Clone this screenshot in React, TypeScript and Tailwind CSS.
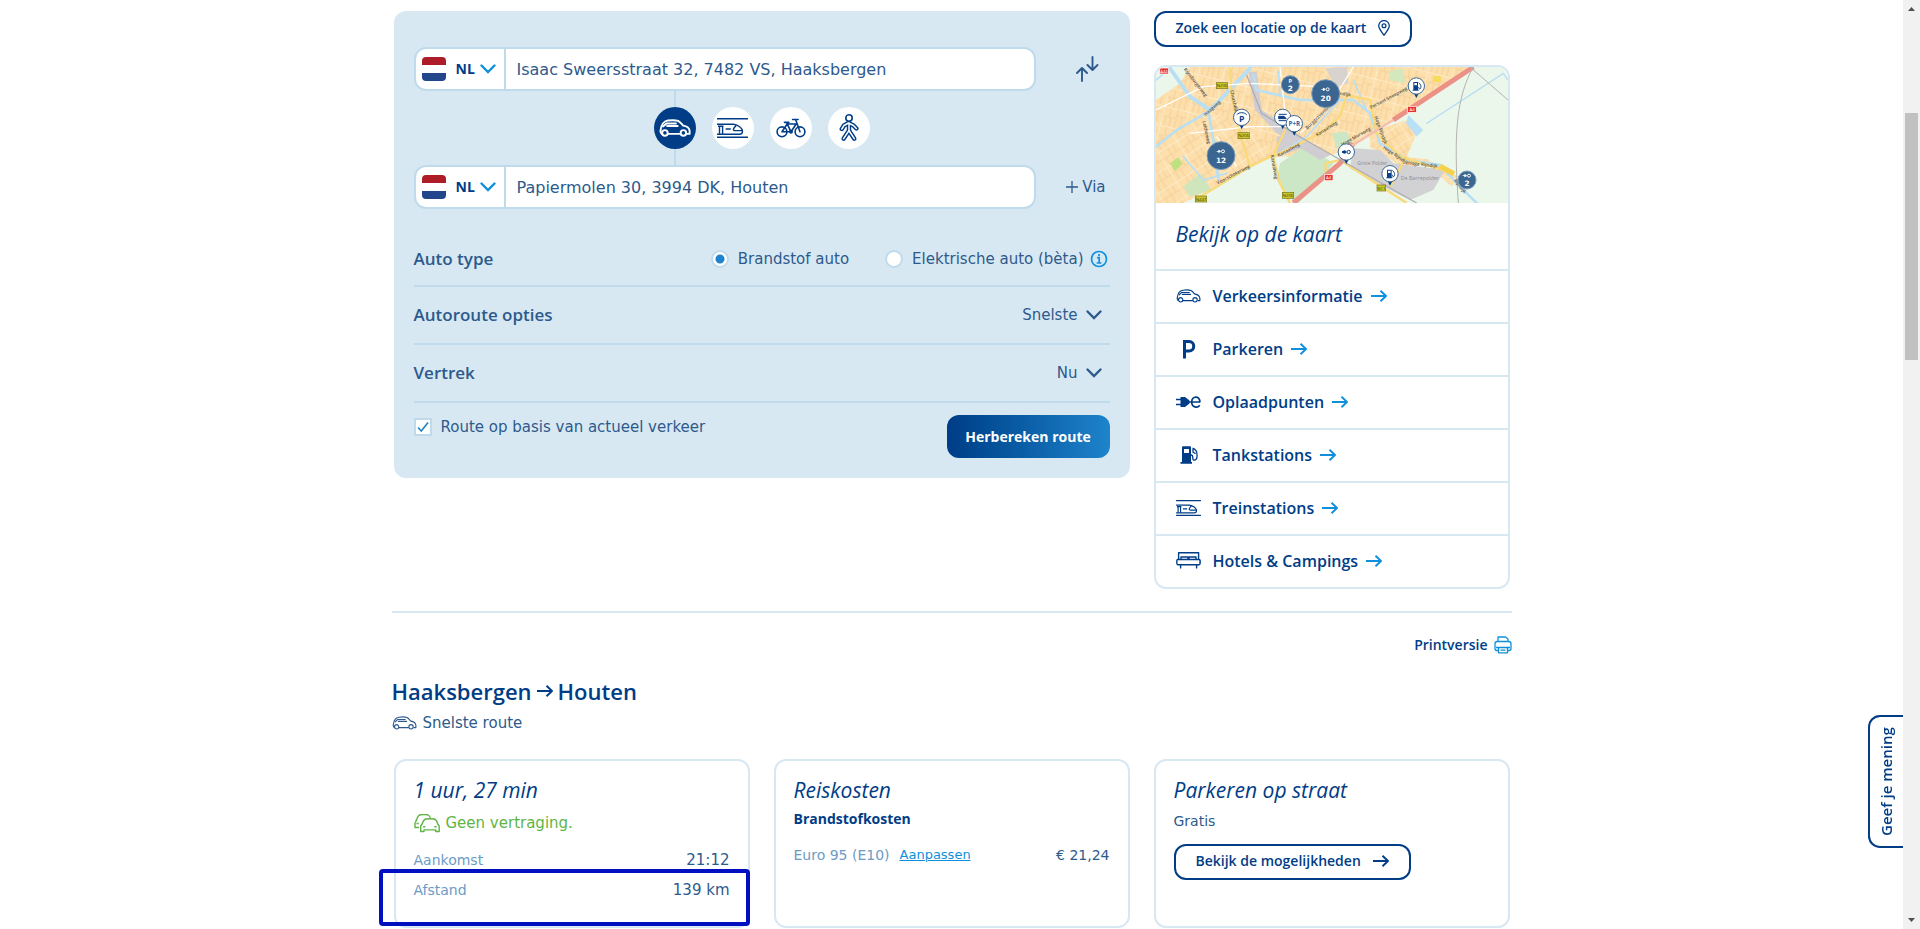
import { useState } from 'react'
import type { ReactNode } from 'react'
import clsx from 'clsx'

const HEAD = "font-['Open_Sans','Noto_Sans',sans-serif]"

function Arrow({ className }: { className?: string }) {
  return (
    <svg viewBox="0 0 16 12" className={clsx('w-4 h-3 shrink-0', className)} fill="none" stroke="currentColor" strokeWidth="1.9" strokeLinejoin="round">
      <path d="M0 6h15M9.500.8L15 6l-5.500 5.200" />
    </svg>
  )
}

function Chevron({ className }: { className?: string }) {
  return (
    <svg viewBox="0 0 16 10" className={clsx('h-[10px] w-4 shrink-0 pointer-events-none', className)} fill="none" stroke="currentColor" strokeWidth="2.4" strokeLinecap="round">
      <path d="M1.500 1.500L8 8l6.500-6.500" />
    </svg>
  )
}

function CarIcon({ className, strokeWidth = 1.2 }: { className?: string; strokeWidth?: number }) {
  return (
    <svg viewBox="0 0 26 15" className={clsx('shrink-0', className)} fill="none" stroke="currentColor" strokeWidth={strokeWidth} strokeLinejoin="round" strokeLinecap="round">
      <path d="M2 12.4C.8 11.8.8 10.4 1 9.2 1.4 5.6 3.4 1.8 7 1.3c3-.4 6.600-.4 8.600.3 1.800 1 2.800 2.400 4.200 3.900 3 .5 5.100 1.900 5.400 4.400v2.500h-2M7.200 12.400h10" />
      <path d="M6.400 5.800h8.800M3 6.200L5.800 3.700h8" />
      <circle cx="4.600" cy="11.600" r="2.300" />
      <circle cx="20" cy="11.600" r="2.300" />
    </svg>
  )
}

function TrainIcon({ className, strokeWidth = 1.4 }: { className?: string; strokeWidth?: number }) {
  return (
    <svg viewBox="0 0 31 20" className={clsx('shrink-0', className)} fill="none" stroke="currentColor" strokeWidth={strokeWidth}>
      <path d="M0 .7h31M0 19.300h31" />
      <path d="M0 6.300h16.500c4.500.6 9 3.700 9 7.200 0 1.700-1 2.700-3 2.700H0" />
      <path d="M2.500 8.500v7.500M5.600 8.500v7.500M1 8.300h5.500M8.600 11h5.200M25 12.600h-7.200c-1.600 0-1.800-1.300-.8-2.600l2.200-2.800" />
    </svg>
  )
}

function BikeIcon() {
  return (
    <svg viewBox="0 0 30 20" className="w-[30px] h-5" fill="none" stroke="currentColor" strokeWidth="1.600" strokeLinejoin="round" strokeLinecap="round">
      <circle cx="6" cy="13.800" r="4.900" />
      <circle cx="24" cy="13.800" r="4.900" />
      <path d="M6 13.800L11.200 6h9L15 13.800H6M10.500 4.400L15 13.800M8.500 4.400h4.300M24 13.800L19.600 1.500h-3M19.600 1.500h2.500" />
      <circle cx="15" cy="13.800" r="1.200" />
    </svg>
  )
}

function WalkIcon() {
  return (
    <svg viewBox="0 0 20 28" className="w-5 h-7" fill="none" strokeLinecap="round" strokeLinejoin="round">
      <g stroke="currentColor" strokeWidth="4.400">
        <path d="M2.800 15l2.200-3.500 4.500-2.500 5 2.500 2.900 3" />
        <path d="M10 9.500v7l-5.400 8.200M10 16.500l1.500 2.500 3.800 5.700" />
      </g>
      <g stroke="#fff" strokeWidth="1.500">
        <path d="M2.800 15l2.200-3.500 4.500-2.500 5 2.500 2.900 3" />
        <path d="M10 9.500v7l-5.400 8.200M10 16.500l1.500 2.500 3.800 5.700" />
      </g>
      <circle cx="10" cy="4" r="3.200" fill="#fff" stroke="currentColor" strokeWidth="1.600" />
    </svg>
  )
}

function ParkingIcon() {
  return (
    <svg viewBox="0 0 25 20" className="w-[25px] h-5" fill="none" stroke="currentColor" strokeWidth="3">
      <path d="M8.500 19.500V2.500h4.500c6.300 0 6.300 9.400 0 9.400H8.500" />
    </svg>
  )
}

function PlugIcon() {
  return (
    <svg viewBox="0 0 25 12" className="w-[25px] h-3" fill="none" stroke="currentColor" strokeWidth="1.700">
      <path d="M0 3.500h6M0 8.500h6M13 6h11" />
      <path d="M4.500 1H9l4.500 3.500v3L9 11H4.500z" fill="currentColor" stroke="none" />
      <path d="M24 6.200c0-6.900-8.300-6.500-8.300-.2 0 5.800 6 6.200 8 3.200" />
    </svg>
  )
}

function FuelIcon() {
  return (
    <svg viewBox="0 0 25 18" className="w-[25px] h-[18px]" fill="none" stroke="currentColor" strokeWidth="1.300">
      <path fillRule="evenodd" d="M6 1.500C6 .8 6.500.3 7 .3h7c.6 0 1 .5 1 1.200V16h1v1.700H4.500V16H6zM8 3v4h5V3z" fill="currentColor" stroke="none" />
      <path d="M16.500 2.200c2.500.8 4.600 3.600 4.600 7 0 2.800-1.300 5-3 5-1.200 0-1.300-1-1.300-2.500 0-1.800-.5-2.700-1.800-2.700M17 2.400v3.800l2.600 1.400" />
    </svg>
  )
}

function BedIcon() {
  return (
    <svg viewBox="0 0 25 17" className="w-[25px] h-[17px]" fill="none" stroke="currentColor" strokeWidth="1.400" strokeLinejoin="round">
      <path d="M2.600 8V.7h20V8M5 7.200V5h7v2.200M13 7.200V5h7v2.200M1.700 7.500h21.600c1.200 0 1.200 5.200 0 5.200H1.700c-1.200 0-1.200-5.200 0-5.200zM4.600 13v3.500M20.600 13v3.500" />
    </svg>
  )
}

function SwapIcon() {
  return (
    <svg viewBox="0 0 23 26" className="w-[23px] h-[26px]" fill="none" stroke="currentColor" strokeWidth="1.900" strokeLinecap="round" strokeLinejoin="round">
      <path d="M6 25V12.500M1 17l5-5 5 5M16.500 1v12.500M11.500 9l5 5 5-5" />
    </svg>
  )
}

function TrafficIcon() {
  return (
    <svg viewBox="0 0 26 19" className="w-[26px] h-[19px] shrink-0" fill="none" stroke="currentColor" strokeWidth="1.400" strokeLinejoin="round">
      <path d="M5 13.500H1V9l1.600-3c.7-3 1.500-5 4-5.300 2.200-.3 5-.3 7.200.1 1.300.4 2 1.600 2.600 3M2.500 6.500l-1-.8M2.500 9.500h2.300" />
      <path d="M8.200 10C9 7 10 5.400 12 5c2.500-.4 5.500-.4 8 0 2 .4 3 2 3.700 5l1.500 2v5.500h-3.400v-1.600H10v1.600H6.700V12zM9 12.800h2.300M20.300 12.800h2.300" />
    </svg>
  )
}

function PrintIcon() {
  return (
    <svg viewBox="0 0 18 18" className="w-[18px] h-[18px]" fill="none" stroke="currentColor" strokeWidth="1.300" strokeLinejoin="round">
      <path d="M4 5.500V1h7.500L14 3v2.500M4 14.500H2.800C1.500 14.500 1 14 1 12.500V8c0-1.500.8-2.500 2.300-2.500h11.400C16.200 5.500 17 6.500 17 8v4.500c0 1.500-.5 2-1.800 2H14M2 11.500h14M4.500 11.500v5.300h9v-5.300M6.500 14.200h5" />
    </svg>
  )
}

function PinIcon() {
  return (
    <svg viewBox="0 0 12 16" className="w-3 h-4" fill="none" stroke="currentColor" strokeWidth="1.300">
      <path d="M6 15.200C3.500 11.500.7 8.800.7 5.800a5.300 5.200 0 0110.600 0c0 3-2.800 5.700-5.300 9.400z" />
      <circle cx="6" cy="5.800" r="1.900" />
    </svg>
  )
}

function InfoIcon() {
  return (
    <svg viewBox="0 0 18 18" className="w-[18px] h-[18px]" fill="none" stroke="currentColor" strokeWidth="1.700">
      <circle cx="9" cy="9" r="7.500" />
      <path d="M7 7.700h2.200V13M6.600 13h4.800M9 4v1.900" />
    </svg>
  )
}

const ROAD_SIGNS = [
  { x: 246, y: 257, t: 'N206', red: false },
  { x: 311, y: 407, t: 'N206', red: false },
  { x: 183, y: 597, t: 'N447', red: false },
  { x: 444, y: 586, t: 'N206', red: false },
  { x: 724, y: 564, t: 'N11', red: false },
  { x: 72, y: 213, t: 'A44', red: true },
  { x: 816, y: 328, t: 'A4', red: true },
  { x: 566, y: 533, t: 'A4', red: true },
]

const STREETS = [
  { x: 163, y: 250, r: 52, t: 'Rijnsburgerweg' },
  { x: 220, y: 328, r: -42, t: 'Haagweg' },
  { x: 280, y: 315, r: 78, t: 'Churchilllaan' },
  { x: 195, y: 398, r: 78, t: 'Leidseweg' },
  { x: 282, y: 528, r: -28, t: 'Voorschoterweg' },
  { x: 448, y: 454, r: -28, t: 'Kanaalweg' },
  { x: 398, y: 502, r: 80, t: 'Kanaalweg' },
  { x: 540, y: 352, r: -44, t: 'Burggravenlaan' },
  { x: 562, y: 390, r: -32, t: 'Kanaalweg' },
  { x: 607, y: 286, r: 6, t: 'Rijndijk' },
  { x: 650, y: 414, r: -30, t: 'Hoge Morsweg' },
  { x: 748, y: 298, r: -28, t: 'Persant Snoepweg' },
  { x: 718, y: 392, r: 70, t: 'Hoge Rijndijk' },
  { x: 765, y: 470, r: 34, t: 'Hoge Rijndijk' },
  { x: 848, y: 498, r: 6, t: 'Hoge Rijndijk' },
  { x: 957, y: 562, r: 52, t: 'Rijndijk' },
]

const CLUSTERS = [
  { x: 451, y: 254, r: 27, n: '2', icon: 'P' },
  { x: 557, y: 281, r: 42, n: '20', icon: '' },
  { x: 243, y: 467, r: 42, n: '12', icon: '' },
  { x: 981, y: 540, r: 27, n: '2', icon: '' },
]

const PINS = [
  { x: 305, y: 352, kind: 'parking' },
  { x: 428, y: 352, kind: 'train' },
  { x: 463, y: 371, kind: 'ride' },
  { x: 829, y: 258, kind: 'fuel' },
  { x: 619, y: 456, kind: 'plug' },
  { x: 750, y: 521, kind: 'fuel' },
]

function MapPreview() {
  return (
    <svg viewBox="48 201 1056 408" preserveAspectRatio="xMidYMid slice" className="block w-full h-[136px]" role="img" aria-label="Kaart" fontFamily="'Open Sans',sans-serif">
      <defs>
        <pattern id="blocks" width="74" height="58" patternUnits="userSpaceOnUse" patternTransform="rotate(14)">
          <rect width="74" height="58" fill="#fddfac" />
          <path d="M0 30H44M44 20H74M22 0V30M44 0V58M60 20V58M12 30V58M28 30V58" stroke="#f5d099" strokeWidth="3" fill="none" />
          <path d="M0 0H74M0 0V58" stroke="#fff0d2" strokeWidth="4" fill="none" />
        </pattern>
        <pattern id="blocksSteep" width="66" height="52" patternUnits="userSpaceOnUse" patternTransform="rotate(-32)">
          <rect width="66" height="52" fill="#fddfac" />
          <path d="M0 26H66M33 0V52M50 0V26M14 26V52" stroke="#f5d099" strokeWidth="3" fill="none" />
          <path d="M0 0H66M0 0V52" stroke="#fff0d2" strokeWidth="4" fill="none" />
        </pattern>
      </defs>
      <rect x="48" y="201" width="1056" height="408" fill="#ecf7ec" />
      {/* built-up areas */}
      <path d="M48 255L130 201H985L760 360 640 440 560 470 400 470 330 500 150 600 48 609z" fill="url(#blocks)" />
      <path d="M48 420L215 330 340 400 400 460 330 500 130 609H48z" fill="url(#blocksSteep)" />
      <path d="M695 330L720 370 760 470 860 478 955 530 935 560 860 490 790 505 740 470 690 440z" fill="url(#blocks)" />
      <path d="M680 400L800 360 830 400 800 470 870 480 780 490 720 460z" fill="url(#blocksSteep)" />
      {/* green, water, industry */}
      <path d="M48 201H150L120 250 48 300z" fill="#ecf7ec" />
      <path d="M205 609L400 480 460 609z" fill="#ecf7ec" />
      <path d="M420 490L500 435 580 490 545 540 475 609 440 590 410 540z" fill="#cbe7c6" />
      <path d="M130 560L180 520 215 570 150 590z" fill="#cfe6bd" />
      <path d="M90 490L115 472 128 492 104 514z" fill="#bfe07f" />
      <path d="M575 400L620 395 640 440 590 445z" fill="#cbe7c6" />
      <path d="M745 215L790 205 795 250 750 240z" fill="#d3e8bd" />
      <path d="M600 445L640 430 640 470 600 480z" fill="#cbe7c6" />
      <path d="M325 215H350L365 330 500 420 570 465 540 480 410 400 345 330z" fill="#cfcdd1" />
      <path d="M555 205L620 201 625 250 590 260z" fill="#d9d3cf" />
      <path d="M410 410L470 400 500 440 410 470z" fill="#d0ced2" />
      <path d="M640 445L720 450 760 490 915 510 880 570 810 600 760 575 630 505z" fill="#d2d1d4" />
      <path d="M805 345L850 390 830 410 798 370z" fill="#b9e0f4" />
      <g fill="none" stroke="#b9dff2" strokeLinecap="round">
        <path d="M90 205L150 290 210 330 250 290 330 205" strokeWidth="12" />
        <path d="M48 440L110 390 205 335 220 420 235 540" strokeWidth="8" />
        <path d="M340 225L350 270 480 300 640 300 690 340 720 430 800 480 900 495 960 560 1010 609" strokeWidth="8" />
        <path d="M860 370L1090 220M1090 220L1104 240" strokeWidth="4" />
        <path d="M400 470L500 410 600 300M130 470L190 540 260 520M415 215L420 290M640 240L680 330M48 240L90 205" strokeWidth="5" />
      </g>
      {/* roads */}
      <g fill="none" stroke="#f9d978" strokeWidth="7">
        <path d="M270 205L275 290 300 400 330 500M330 500L180 590M330 500L400 465 440 380" />
        <path d="M620 285L600 350 540 400 400 470 420 550 450 609M620 285L690 300 710 400 780 470 940 520" />
        <path d="M555 490L600 480 800 609M555 490L560 540M750 560L800 470" />
      </g>
      <g fill="none" stroke="#fff" strokeWidth="4">
        <path d="M48 330L190 260 330 250 540 260M420 201L440 380M640 201L560 330 480 400M150 400L330 380 440 380M230 410L290 500" />
      </g>
      <path d="M1000 201L760 360M640 430L600 490 460 609" fill="none" stroke="#eb9185" strokeWidth="15" />
      <path d="M760 360L630 440" fill="none" stroke="#f4bfae" strokeWidth="7" />
      <path d="M320 225L365 340 470 405 830 609" fill="none" stroke="#b2aeb3" strokeWidth="4" />
      <path d="M1000 201C950 290 940 400 955 609M990 201L1104 300" fill="none" stroke="#b3b3b0" strokeWidth="3" />
      <path d="M900 498L942 522" stroke="#f5d24c" strokeWidth="16" />
      <rect x="880" y="228" width="22" height="18" fill="#f7dd55" />
      {STREETS.map((s, i) => (
        <text key={i} x={s.x} y={s.y} fontSize="14" fontWeight="600" fill="#56524b" textAnchor="middle" transform={`rotate(${s.r} ${s.x} ${s.y})`}>{s.t}</text>
      ))}
      <text x="652" y="494" fontSize="15" fill="#8f8d91">Grote Polder</text>
      <text x="782" y="540" fontSize="16" fill="#8f8d91">De Barrepolder</text>
      {ROAD_SIGNS.map((s, i) => (
        <g key={i}>
          <rect x={s.x - (s.t.length > 3 ? 17 : 13)} y={s.y - 9} width={s.t.length > 3 ? 34 : 26} height="18" fill={s.red ? '#e8322f' : '#c9c62c'} stroke={s.red ? '#fff' : '#77741d'} strokeWidth="2" />
          <text x={s.x} y={s.y + 5} fontSize="13" textAnchor="middle" fill={s.red ? '#fff' : '#44430f'}>{s.t}</text>
        </g>
      ))}
      {PINS.map((p, i) => (
        <g key={i} transform={`translate(${p.x} ${p.y})`}>
          <path d="M-6 24L0 36 6 24z" fill="#003d86" />
          <circle r="24.500" fill="#fff" stroke="#3e6791" strokeWidth="3" />
          {p.kind === 'fuel' && (
            <>
              <path fillRule="evenodd" d="M-9-12H5V11H7V14H-11V11H-9zM-6-9V-2H2V-9z" fill="#0b3f86" />
              <path d="M7-10C14-5 16 4 11 9 8 11 8 5 6 3" fill="none" stroke="#0b3f86" strokeWidth="3" />
            </>
          )}
          {p.kind === 'parking' && (
            <>
              <path d="M-15-8C-7-16 7-16 15-8" fill="none" stroke="#0b3f86" strokeWidth="3" />
              <text y="13" fontSize="26" fontWeight="700" textAnchor="middle" fill="#0b3f86">P</text>
            </>
          )}
          {p.kind === 'train' && <path d="M-12-9H12M-12 10H12M-12-3H4L11 4H-12z" fill="#0b3f86" stroke="#0b3f86" strokeWidth="3" />}
          {p.kind === 'ride' && <text y="7" fontSize="19" fontWeight="700" textAnchor="middle" fill="#3a68a0">P+R</text>}
          {p.kind === 'plug' && (
            <>
              <path d="M-13-3H-8V-6L0-3V3L-8 6V3H-13z" fill="#0b3f86" />
              <circle cx="7" r="5" fill="none" stroke="#0b3f86" strokeWidth="3" />
            </>
          )}
        </g>
      ))}
      {CLUSTERS.map((c, i) => (
        <g key={i} transform={`translate(${c.x} ${c.y})`}>
          <circle r={c.r} fill="#3a6691" stroke="#7f9dbb" strokeWidth="3" />
          {c.icon ? (
            <text y="-4" fontSize="17" fontWeight="700" textAnchor="middle" fill="#fff">{c.icon}</text>
          ) : (
            <>
              <path d="M-13-14H-8V-18L-1-15V-11L-8-8V-12H-13z" fill="#fff" />
              <circle cx="6" cy="-13" r="4.500" fill="none" stroke="#fff" strokeWidth="3" />
            </>
          )}
          <text y={c.r > 30 ? 23 : 18} fontSize="22" fontWeight="700" textAnchor="middle" fill="#fff" fontFamily="'DejaVu Sans',sans-serif">{c.n}</text>
        </g>
      ))}
    </svg>
  )
}

function AddressField({ id, label, value }: { id: string; label: string; value: string }) {
  return (
    <div className="flex h-11 flex-1 overflow-hidden rounded-xl border-2 border-[#bfdbeb] bg-white">
      <div className="relative flex w-[90px] shrink-0 items-center border-r-2 border-[#bfdbeb] pl-[6px]">
        <span className="flex h-6 w-6 shrink-0 flex-col overflow-hidden rounded">
          <span className="flex-1 bg-[#ae1c28]" />
          <span className="flex-1 bg-white" />
          <span className="flex-1 bg-[#21468b]" />
        </span>
        <select aria-label={`Land ${label}`} className={clsx(HEAD, 'absolute inset-0 w-full appearance-none bg-transparent pl-10 text-sm font-bold text-[#003d86] outline-none')}>
          <option>NL</option>
          <option>BE</option>
          <option>DE</option>
        </select>
        <Chevron className="absolute right-2 text-[#0f90dc]" />
      </div>
      <input id={id} aria-label={label} defaultValue={value} className="min-w-0 flex-1 bg-transparent px-[11px] pt-[2px] text-base text-[#2d5a8c] outline-none" />
    </div>
  )
}

function OptionRow({ id, label, options }: { id: string; label: string; options: string[] }) {
  return (
    <div className="flex h-[58px] items-center justify-between border-b-2 border-[#bfdbeb]">
      <label htmlFor={id} className={clsx(HEAD, 'text-[17px] font-semibold')}>{label}</label>
      <div className="relative flex items-center pr-2">
        <select id={id} className="field-sizing-content appearance-none bg-transparent pr-6 text-right text-[15px] outline-none">
          {options.map(o => <option key={o}>{o}</option>)}
        </select>
        <Chevron className="absolute right-2" />
      </div>
    </div>
  )
}

const MODES: { id: string; label: string; icon: ReactNode }[] = [
  { id: 'car', label: 'Auto', icon: <CarIcon className="w-8 h-[18px]" strokeWidth={1.600} /> },
  { id: 'train', label: 'Trein', icon: <TrainIcon className="w-[31px] h-5" /> },
  { id: 'bike', label: 'Fiets', icon: <BikeIcon /> },
  { id: 'walk', label: 'Lopen', icon: <WalkIcon /> },
]

const RADIO = 'h-[18px] w-[18px] shrink-0 appearance-none rounded-full border-2 border-[#bfdbeb] bg-white checked:bg-[radial-gradient(#1e84cb_0_4px,#fff_5px)]'

function RouteForm() {
  const [mode, setMode] = useState('car')

  return (
    <form className="rounded-xl bg-[#d8e8f3] px-5 pt-9 pb-5 text-[#2d5a8c] lg:col-span-2" onSubmit={e => e.preventDefault()}>
      <div className="flex items-center">
        <AddressField id="from" label="Vertrekpunt" value="Isaac Sweersstraat 32, 7482 VS, Haaksbergen" />
        <div className="flex w-[74px] justify-end pr-[11px]">
          <button type="button" aria-label="Wissel"><SwapIcon /></button>
        </div>
      </div>

      <div className="flex h-[74px] items-center justify-center gap-4">
        {MODES.map(m => (
          <div key={m.id} className="relative flex h-full items-center">
            {mode === m.id && <span className="absolute inset-y-0 left-5 w-[2px] bg-[#bfdbeb]" />}
            <button
              type="button"
              aria-label={m.label}
              onClick={() => setMode(m.id)}
              className={clsx(
                'relative flex h-[42px] w-[42px] items-center justify-center rounded-full',
                mode === m.id ? 'bg-[#003d86] text-white' : 'bg-white text-[#003d86]'
              )}
            >
              {m.icon}
            </button>
          </div>
        ))}
      </div>

      <div className="flex items-center">
        <AddressField id="to" label="Bestemming" value="Papiermolen 30, 3994 DK, Houten" />
        <div className="flex w-[74px] justify-end pr-1">
          <button type="button" className="flex items-center gap-1 text-[15px]">
            <svg viewBox="0 0 12 12" className="w-3 h-3" stroke="currentColor" strokeWidth="1.300"><path d="M6 0v12M0 6h12" /></svg>
            Via
          </button>
        </div>
      </div>

      <div className="mt-6 flex h-[54px] items-center justify-between border-b-2 border-[#bfdbeb]">
        <span className={clsx(HEAD, 'text-[17px] font-semibold')}>Auto type</span>
        <div className="flex items-center pr-[2px] text-[15px]">
          <label className="mr-9 flex items-center gap-[9px]">
            <input type="radio" name="type" defaultChecked className={RADIO} />
            Brandstof auto
          </label>
          <label className="flex items-center gap-[9px]">
            <input type="radio" name="type" className={RADIO} />
            Elektrische auto (bèta)
          </label>
          <button type="button" aria-label="Informatie" className="ml-[6px] text-[#0f90dc]"><InfoIcon /></button>
        </div>
      </div>
      <OptionRow id="options" label="Autoroute opties" options={['Snelste', 'Kortste']} />
      <OptionRow id="depart" label="Vertrek" options={['Nu', 'Later']} />

      <div className="flex items-start justify-between pt-3">
        <label className="flex h-6 items-center gap-[9px] text-[15px]">
          <span className="relative flex h-[18px] w-[18px]">
            <input type="checkbox" defaultChecked className="peer h-full w-full appearance-none border-2 border-[#bfdbeb] bg-white" />
            <svg viewBox="0 0 12 12" className="pointer-events-none absolute inset-[3px] hidden peer-checked:block" fill="none" stroke="#1e84cb" strokeWidth="1.600">
              <path d="M1 6.500L4.300 10 11 1.500" />
            </svg>
          </span>
          Route op basis van actueel verkeer
        </label>
        <button className={clsx(HEAD, 'h-[43px] w-[163px] rounded-xl bg-linear-to-r from-[#003d86] to-[#1e84cb] text-sm font-bold text-white')}>
          Herbereken route
        </button>
      </div>
    </form>
  )
}

const LINKS: { label: string; icon: ReactNode }[] = [
  { label: 'Verkeersinformatie', icon: <CarIcon className="w-[25px] h-[14px]" /> },
  { label: 'Parkeren', icon: <ParkingIcon /> },
  { label: 'Oplaadpunten', icon: <PlugIcon /> },
  { label: 'Tankstations', icon: <FuelIcon /> },
  { label: 'Treinstations', icon: <TrainIcon className="w-[25px] h-4" strokeWidth={1.500} /> },
  { label: 'Hotels & Campings', icon: <BedIcon /> },
]

const OUTLINE_BUTTON = 'flex h-9 items-center gap-3 rounded-xl border-2 border-[#003d86] px-5 pb-[2px] text-sm font-semibold text-[#003d86]'

function Sidebar() {
  return (
    <aside className={clsx(HEAD, 'text-[#003d86]')}>
      <button className={OUTLINE_BUTTON}>
        Zoek een locatie op de kaart
        <PinIcon />
      </button>
      <div className="mt-[18px] overflow-hidden rounded-xl border-2 border-[#d8e8f3]">
        <MapPreview />
        <h2 className="flex h-[66px] items-center px-5 pb-[2px] text-[21px] font-medium italic">Bekijk op de kaart</h2>
        <nav>
          {LINKS.map(l => (
            <a key={l.label} href="#" className="flex h-[53px] items-center border-t-2 border-[#d8e8f3] px-5 pb-[2px] text-base font-semibold">
              <span className="mr-3 flex w-[25px] justify-center">{l.icon}</span>
              {l.label}
              <Arrow className="ml-2 text-[#0f90dc]" />
            </a>
          ))}
        </nav>
      </div>
    </aside>
  )
}

const CARD = 'relative h-[169px] rounded-xl border-2 border-[#d8e8f3] px-[18px] pt-[14px]'
const CARD_TITLE = 'pb-[2px] text-[21px] leading-[30px] font-medium italic text-[#003d86]'

function Results() {
  return (
    <section className="text-[#2d5a8c]">
      <div className="mt-[22px] flex justify-end">
        <a href="#" className={clsx(HEAD, 'flex h-5 items-center gap-[6px] text-sm font-semibold text-[#003d86]')}>
          Printversie
          <span className="text-[#0f90dc]"><PrintIcon /></span>
        </a>
      </div>
      <h1 className={clsx(HEAD, 'mt-5 flex items-center gap-[5px] pb-1 text-[22px] leading-8 font-semibold text-[#003d86]')}>
        Haaksbergen
        <Arrow />
        Houten
      </h1>
      <p className="flex items-center gap-[6px] text-[15px] leading-6">
        <CarIcon className="w-[25px] h-[14px]" />
        Snelste route
      </p>

      <div className="mx-[2px] mt-6 grid grid-cols-1 gap-6 lg:grid-cols-3">
        <div className={CARD}>
          <h2 className={clsx(HEAD, CARD_TITLE)}>1 uur, 27 min</h2>
          <p className="mt-1 flex items-center gap-[6px] text-[15px] leading-6 text-[#5fb446]">
            <TrafficIcon />
            Geen vertraging.
          </p>
          <dl className="mt-[10px]">
            <div className="flex justify-between leading-[30px]">
              <dt className="text-sm leading-[30px] text-[#6c9bc6]">Aankomst</dt>
              <dd className="text-[15px] leading-[30px]">21:12</dd>
            </div>
            <div className="flex justify-between leading-[30px]">
              <dt className="text-sm leading-[30px] text-[#6c9bc6]">Afstand</dt>
              <dd className="text-[15px] leading-[30px]">139 km</dd>
            </div>
          </dl>
          <span className="pointer-events-none absolute top-[108px] -right-[2px] -left-[17px] h-[57px] rounded border-4 border-[#0010c0]" />
        </div>

        <div className={CARD}>
          <h2 className={clsx(HEAD, CARD_TITLE)}>Reiskosten</h2>
          <h3 className={clsx(HEAD, 'text-sm leading-6 font-bold text-[#003d86]')}>Brandstofkosten</h3>
          <div className="mt-3 flex items-center text-sm leading-6">
            <span className="text-[#6c9bc6]">Euro 95 (E10)</span>
            <a href="#" className="ml-[10px] text-[13px] text-[#0f90dc] underline">Aanpassen</a>
            <span className="ml-auto">€ 21,24</span>
          </div>
        </div>

        <div className={CARD}>
          <h2 className={clsx(HEAD, CARD_TITLE)}>Parkeren op straat</h2>
          <p className="mt-[2px] text-sm leading-6">Gratis</p>
          <button className={clsx(HEAD, OUTLINE_BUTTON, 'mt-[11px]')}>
            Bekijk de mogelijkheden
            <Arrow />
          </button>
        </div>
      </div>
    </section>
  )
}

function ScrollTrack() {
  return (
    <div className="fixed inset-y-0 right-0 flex w-[17px] flex-col items-center justify-between bg-[#f1f1f1] py-[7px]">
      <svg viewBox="0 0 7 4" className="w-[7px] h-1" fill="#505050"><path d="M0 4h7L3.500 0z" /></svg>
      <svg viewBox="0 0 7 4" className="w-[7px] h-1" fill="#505050"><path d="M0 0h7L3.500 4z" /></svg>
      <span className="absolute inset-x-[2px] top-[113px] h-[247px] bg-[#c1c1c1]" />
    </div>
  )
}

export default function App() {
  return (
    <div className="min-h-screen bg-white pr-[17px] font-['DejaVu_Sans',Verdana,sans-serif]">
      <main className="mx-auto max-w-[1120px] pt-[11px]">
        <div className="mx-[2px] grid grid-cols-1 items-start gap-6 lg:grid-cols-3">
          <RouteForm />
          <Sidebar />
        </div>
        <hr className="mt-[22px] border-t-2 border-[#d8e8f3]" />
        <Results />
      </main>
      <button className={clsx(HEAD, 'fixed top-[715px] right-[17px] h-[133px] w-[35px] rotate-180 rounded-r-xl border-2 border-l-0 border-[#003d86] bg-white text-[15px] font-semibold text-[#003d86] [writing-mode:vertical-rl]')}>
        Geef je mening
      </button>
      <ScrollTrack />
    </div>
  )
}
